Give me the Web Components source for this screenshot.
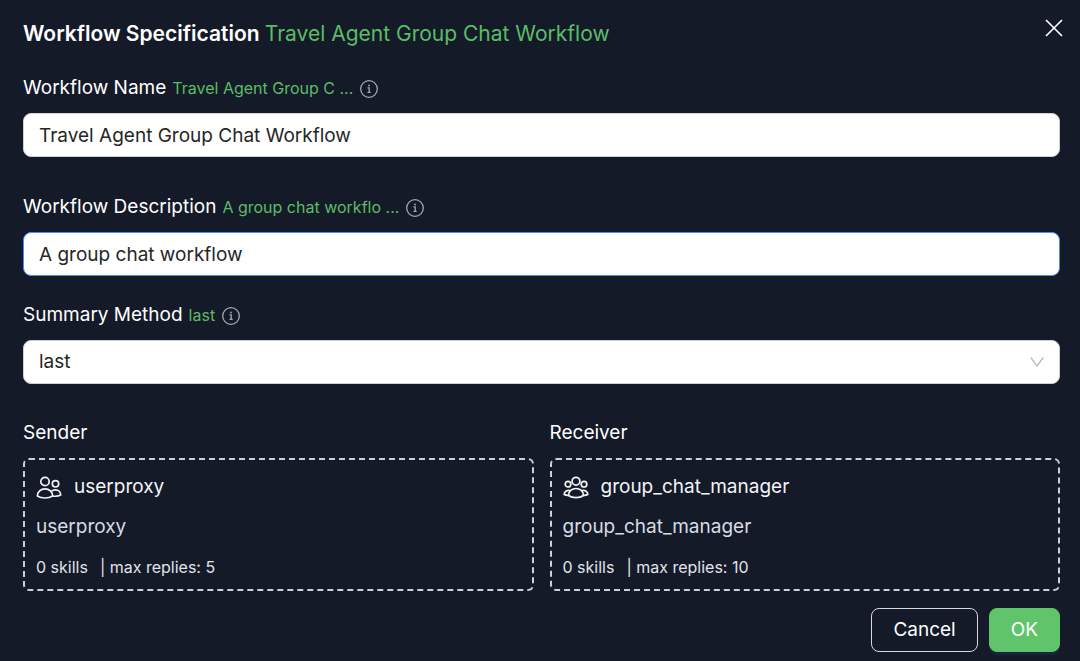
<!DOCTYPE html>
<html lang="en">
<head>
<meta charset="utf-8">
<meta name="viewport" content="width=device-width, initial-scale=1">
<title>Workflow Specification</title>
<style>
  body { margin: 0; min-height: 100vh; background: #141a28; color: #fff; font-family: Inter, "Open Sans", sans-serif; }
</style>
</head>
<body>
<workflow-dialog heading="Workflow Specification" name="Travel Agent Group Chat Workflow">
  <workflow-field label="Workflow Name" preview="Travel Agent Group C ..." value="Travel Agent Group Chat Workflow"></workflow-field>
  <workflow-field label="Workflow Description" preview="A group chat workflo ..." value="A group chat workflow" active></workflow-field>
  <workflow-select label="Summary Method" value="last"></workflow-select>
  <agent-pair>
    <agent-card role-name="Sender" name="userproxy" replies="5"><user-pair-icon></user-pair-icon></agent-card>
    <agent-card role-name="Receiver" name="group_chat_manager" replies="10"><user-group-icon></user-group-icon></agent-card>
  </agent-pair>
  <dialog-button slot="actions">Cancel</dialog-button>
  <dialog-button slot="actions" primary>OK</dialog-button>
</workflow-dialog>

<script>
class BaseElement extends HTMLElement {
  connectedCallback() {
    if (this.shadowRoot) return;
    this.attachShadow({ mode: "open" }).innerHTML =
      `<style>*{box-sizing:border-box}</style>` + this.render();
  }
  attr(name) { return this.getAttribute(name) || ""; }
}

class InfoIcon extends BaseElement {
  render() {
    return `<style>:host{display:block;width:20px;height:20px;color:#a3a8b3}svg{display:block}</style>
    <svg width="20" height="20" viewBox="0 0 20 20" fill="none" stroke="currentColor" stroke-width="1.3" aria-hidden="true">
      <circle cx="10" cy="11" r="8.3"/><path d="M8.500 9.800H10.200V14.200M8.500 14.300H11.700"/><circle cx="10" cy="7.500" r=".9" fill="currentColor" stroke="none"/>
    </svg>`;
  }
}
customElements.define("info-icon", InfoIcon);

class UserPairIcon extends BaseElement {
  render() {
    return `<style>:host{display:block}svg{display:block}</style>
    <svg width="26" height="26" viewBox="0 -1 26 26" fill="none" stroke="currentColor" stroke-width="1.7" stroke-linejoin="round" aria-hidden="true">
      <circle cx="9" cy="6.500" r="4.200"/><circle cx="19.500" cy="8.800" r="3.200"/>
      <path d="M1.400 21C1.400 16.700 4.800 13.800 9 13.800S16.600 16.700 16.600 21C14.600 22.300 12 23 9 23S3.400 22.300 1.400 21Z"/>
      <path d="M15.500 16.200C16.500 15.300 18 14.900 19.500 14.900C22.500 14.900 24.700 17 24.700 20C22.500 21.200 19.500 21.500 16.600 21"/>
    </svg>`;
  }
}
customElements.define("user-pair-icon", UserPairIcon);

class UserGroupIcon extends BaseElement {
  render() {
    return `<style>:host{display:block}svg{display:block}</style>
    <svg width="26" height="26" viewBox="0 -1 26 26" fill="none" stroke="currentColor" stroke-width="1.7" stroke-linejoin="round" aria-hidden="true">
      <circle cx="13" cy="6.200" r="3.900"/><circle cx="5" cy="9.200" r="2.800"/><circle cx="21" cy="9.200" r="2.800"/>
      <path d="M5.500 20.500C5.500 16.400 8.800 13.500 13 13.500S20.500 16.400 20.500 20.500C18.500 21.900 16 22.600 13 22.600S7.500 21.900 5.500 20.500Z"/>
      <path d="M7.500 15.700C4.300 14.500 1.200 16.300 1.200 19.400C2.600 20.200 4 20.400 5.500 20.300M18.500 15.700C21.700 14.500 24.800 16.300 24.800 19.400C23.400 20.200 22 20.400 20.500 20.300"/>
    </svg>`;
  }
}
customElements.define("user-group-icon", UserGroupIcon);

const fieldStyles = `
  :host{display:block}
  .head{display:flex;align-items:center;gap:6px;height:28px;margin-bottom:11px}
  label{font-size:19px;line-height:28px}
  .preview{font-size:16px;line-height:28px;color:#5bbd66}
  .control{display:block;width:100%;height:44px;padding:0 15px;border:1px solid #d0d0d4;border-radius:8px;
    background:#fff;color:#262626;font:19px/28px Inter,"Open Sans",sans-serif;outline:none;appearance:none}
`;

class WorkflowField extends BaseElement {
  render() {
    return `<style>${fieldStyles}
      :host([active]) .control{border-color:#4a8cf7}</style>
      <div class="head"><label for="box">${this.attr("label")}</label><span class="preview">${this.attr("preview")}</span><info-icon></info-icon></div>
      <input class="control" id="box" type="text" value="${this.attr("value")}">`;
  }
}
customElements.define("workflow-field", WorkflowField);

class WorkflowSelect extends BaseElement {
  render() {
    return `<style>${fieldStyles}
      .wrap{display:grid;align-items:center}
      .wrap>*{grid-area:1/1}
      svg{justify-self:end;margin-right:16px;pointer-events:none}</style>
      <div class="head"><label for="box">${this.attr("label")}</label><span class="preview">${this.attr("value")}</span><info-icon></info-icon></div>
      <div class="wrap"><select class="control" id="box"><option>${this.attr("value")}</option></select>
      <svg width="14" height="12" viewBox="0 0 14 12" fill="none" stroke="#bfbfbf" stroke-width="1.5" aria-hidden="true"><path d="M.8 1.500L7 10L13.200 1.500"/></svg></div>`;
  }
}
customElements.define("workflow-select", WorkflowSelect);

class AgentPair extends BaseElement {
  render() {
    return `<style>:host{display:grid;grid-template-columns:1fr 1fr;gap:16px}</style><slot></slot>`;
  }
}
customElements.define("agent-pair", AgentPair);

class AgentCard extends BaseElement {
  render() {
    return `<style>
      :host{display:block;font-size:19px;line-height:28px;min-width:0}
      .role{margin-bottom:11px}
      .card{border:2px dashed #cdd0d6;border-radius:6px;padding:13px 11px 8px}
      .name{display:flex;align-items:center;gap:12px;color:#f3f4f6}
      .detail{margin-top:12px;color:#d8dce4}
      .stats{display:flex;gap:12px;margin-top:12px;font-size:16px;line-height:28px;color:#e1e4ea}
      </style>
      <div class="role">${this.attr("role-name")}</div>
      <div class="card">
        <div class="name"><slot></slot><span>${this.attr("name")}</span></div>
        <div class="detail">${this.attr("name")}</div>
        <div class="stats"><span>0 skills</span><span>| max replies: ${this.attr("replies")}</span></div>
      </div>`;
  }
}
customElements.define("agent-card", AgentCard);

class DialogButton extends BaseElement {
  render() {
    return `<style>
      :host{display:block}
      button{height:44px;padding:0 21px;border:1px solid #d9d9d9;border-radius:8px;background:transparent;color:#fff;
        font:19px/28px Inter,"Open Sans",sans-serif;cursor:pointer}
      :host([primary]) button{background:#60c46a;border-color:#60c46a;box-shadow:0 3px 0 #172540}
      </style><button type="button"><slot></slot></button>`;
  }
}
customElements.define("dialog-button", DialogButton);

class WorkflowDialog extends BaseElement {
  render() {
    return `<style>
      :host{display:block;padding:18px 20px 9px 23px}
      header{display:flex;align-items:flex-start;justify-content:space-between;margin-bottom:24px}
      h1{margin:0;font-size:21px;line-height:32px;font-weight:600}
      h1 span{font-weight:400;color:#5bbd66}
      .close{display:block;padding:0;margin:0 -4px 0 0;border:0;background:none;color:#fff;cursor:pointer}
      .close svg{display:block}
      .body{display:flex;flex-direction:column}
      ::slotted(workflow-field){margin-bottom:36px}
      ::slotted(workflow-field[active]){margin-bottom:25px}
      ::slotted(agent-pair){margin-top:35px}
      footer{display:flex;justify-content:flex-end;gap:11px;margin-top:17px}
      </style>
      <header><h1>${this.attr("heading")} <span>${this.attr("name")}</span></h1>
      <button class="close" type="button" aria-label="Close"><svg width="20" height="20" viewBox="0 0 20 20" fill="none" stroke="currentColor" stroke-width="1.700"><path d="M2 2L18 18M18 2L2 18"/></svg></button></header>
      <div class="body"><slot></slot></div>
      <footer><slot name="actions"></slot></footer>`;
  }
}
customElements.define("workflow-dialog", WorkflowDialog);
</script>
</body>
</html>
